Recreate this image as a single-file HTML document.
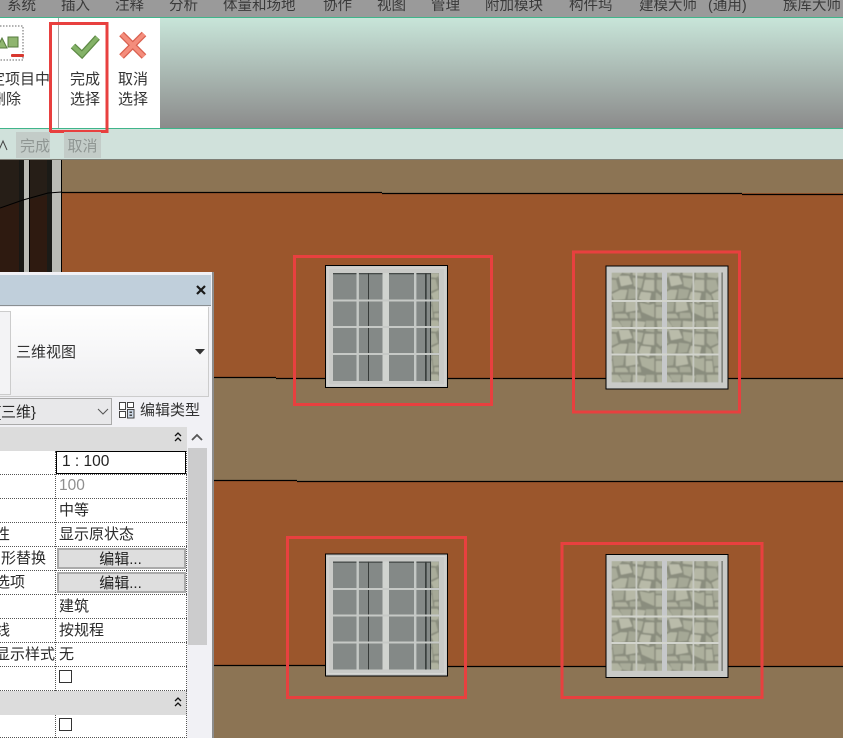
<!DOCTYPE html>
<html lang="zh"><head><meta charset="utf-8"><title>Revit</title>
<style>
html,body{margin:0;padding:0;background:#8c7454}
body{position:relative;width:843px;height:738px;overflow:hidden;font-family:"Liberation Sans","Noto Sans CJK SC",sans-serif;color:#222}
#w{position:absolute;left:0;top:0;width:843px;height:738px;overflow:hidden;filter:blur(.35px)}
.a{position:absolute;white-space:nowrap}
.t{position:absolute;white-space:nowrap;font-size:15px;line-height:20px;color:#2a2a2a}
.m{position:absolute;top:-4px;font-size:14.5px;line-height:20px;color:#3a3a3a;white-space:nowrap}
.r{position:absolute;left:0;width:187px;height:24px;border-bottom:1px dotted #555;box-sizing:border-box}
.btn{position:absolute;left:57px;width:129px;height:21px;background:#dedede;border:2px solid #aaa;box-sizing:border-box;font-size:15px;line-height:19px;text-align:center;color:#222;padding-right:2px}
.cb{position:absolute;left:59px;width:13px;height:13px;border:1px solid #333;background:#fff;box-sizing:border-box}
</style></head><body><div id="w">

<svg class="a" style="left:0;top:0" width="843" height="738" viewBox="0 0 843 738">
<defs>
<filter id="sb" x="0" y="0" width="100%" height="100%"><feGaussianBlur stdDeviation=".45"/></filter>
<pattern id="st" width="50" height="54" patternUnits="userSpaceOnUse">
<rect width="50" height="54" fill="#8a8d7e"/>
<g stroke-width="1.500" stroke-linejoin="round">
<path d="M2 2L12 2 16 7 11 12 3 11Z" fill="#b0b3a0" stroke="#b0b3a0"/><path d="M15 2L25 2 24 8 18 7Z" fill="#a8ab99" stroke="#a8ab99"/>
<path d="M28 2L39 3 37 10 28 9Z" fill="#b6b8a6" stroke="#b6b8a6"/><path d="M41 2L48 2 48 12 41 11Z" fill="#a9ac9a" stroke="#a9ac9a"/>
<path d="M2 15L10 15 12 23 5 26 2 23Z" fill="#a9ac9a" stroke="#a9ac9a"/><path d="M14 11L23 11 26 18 16 20Z" fill="#babcaa" stroke="#babcaa"/>
<path d="M28 13L37 14 35 22 29 20Z" fill="#acaf9c" stroke="#acaf9c"/><path d="M40 15L48 15 48 25 38 24Z" fill="#b5b7a5" stroke="#b5b7a5"/>
<path d="M7 29L15 25 21 25 19 33 9 34Z" fill="#b2b5a2" stroke="#b2b5a2"/><path d="M24 24L33 25 31 32 23 33Z" fill="#a5a896" stroke="#a5a896"/>
<path d="M36 27L45 28 43 37 34 33Z" fill="#b8baa8" stroke="#b8baa8"/><path d="M1 28L5 31 6 39 1 39Z" fill="#a7aa98" stroke="#a7aa98"/>
<path d="M8 37L18 37 17 45 9 46Z" fill="#a6a997" stroke="#a6a997"/><path d="M21 36L30 36 32 44 21 46Z" fill="#b7b9a7" stroke="#b7b9a7"/>
<path d="M35 38L44 40 48 39 48 51 37 46Z" fill="#adb09d" stroke="#adb09d"/><path d="M1 42L6 42 7 52 1 52Z" fill="#b2b5a2" stroke="#b2b5a2"/>
<path d="M10 49L20 49 22 52 10 52Z" fill="#aeb19e" stroke="#aeb19e"/><path d="M25 48L34 48 35 52 25 52Z" fill="#a7aa98" stroke="#a7aa98"/>
</g>
</pattern>
<g id="gw">
<rect x=".5" y=".5" width="122" height="122" fill="#c9cac7" stroke="#000"/>
<rect x="3" y="3" width="117" height="117" fill="none" stroke="#d6d7d4"/>
<rect x="8" y="8" width="106" height="108" fill="#848987"/>
<rect x="106" y="8" width="8" height="108" fill="url(#st)" filter="url(#sb)"/>
<rect x="8" y="8" width="97" height="1.300" fill="#454a48"/>
<rect x="43" y="8" width="1" height="108" fill="#383c3a"/>
<rect x="100" y="8" width="1.700" height="108" fill="#3b403e"/>
<rect x="105" y="8" width="1" height="108" fill="#3b403e"/>
<rect x="57.500" y="8" width="6.500" height="108" fill="#d0d3cf"/>
<rect x="31.500" y="8" width="2.400" height="108" fill="#c4c8c5"/>
<rect x="89" y="8" width="2.400" height="108" fill="#c4c8c5"/>
<rect x="8" y="34.500" width="106" height="2" fill="#c6c9c6"/>
<rect x="8" y="61" width="106" height="2" fill="#c6c9c6"/>
<rect x="8" y="88" width="106" height="2" fill="#c6c9c6"/>
</g>
<g id="sw">
<rect x=".5" y=".5" width="122" height="123" fill="#c9cac7" stroke="#000"/>
<rect x="6" y="7" width="107" height="110" fill="url(#st)" filter="url(#sb)"/>
<rect x="116" y="7" width="1.200" height="110" fill="#6a6d64"/>
<rect x="56.500" y="7" width="5" height="110" fill="#c6c8ca"/>
<rect x="30" y="7" width="1.800" height="110" fill="#c6c8c0"/>
<rect x="87" y="7" width="1.800" height="110" fill="#c6c8c0"/>
<rect x="6" y="34.500" width="107" height="2" fill="#d2d4cd"/>
<rect x="6" y="61.500" width="107" height="2" fill="#d2d4cd"/>
<rect x="6" y="88" width="107" height="2" fill="#d2d4cd"/>
</g>
</defs>
<rect width="843" height="738" fill="#8c7454"/>
<rect y="193" width="843" height="185" fill="#9b562c"/>
<rect y="481" width="843" height="185" fill="#9b562c"/>
<path d="M62 192.500H382M382 193.500H742M742 194.500H843M62 377.500H276M276 378.500H843M62 480.500H297M297 481.500H843M62 665.500H400M400 666.500H843" stroke="#000" stroke-width="1.200" fill="none"/>
<rect x="0" y="160" width="62" height="113" fill="#261e17"/>
<path d="M0 208L23 201 48 195V273H0Z" fill="#2e1a10"/>
<rect x="19" y="160" width="5" height="113" fill="#181815"/>
<rect x="24" y="160" width="5" height="113" fill="#b9bab4"/>
<rect x="29" y="160" width="1" height="113" fill="#000"/>
<rect x="47" y="160" width="5" height="113" fill="#1b1b17"/>
<rect x="52" y="160" width="9" height="113" fill="#bbbcb6"/>
<rect x="61" y="160" width="1" height="113" fill="#000"/>
<path d="M0 208L23 200 48 193 62 192" stroke="#000" fill="none"/>
<use href="#gw" x="325" y="265"/>
<use href="#sw" x="605.500" y="265.500"/>
<use href="#gw" x="325" y="553.500"/>
<use href="#sw" x="605.500" y="554"/>
<g fill="none" stroke="#e8403f" stroke-width="3">
<rect x="294.500" y="256.500" width="197" height="148"/>
<rect x="573.500" y="252" width="166" height="160"/>
<rect x="287.500" y="537.500" width="178" height="160"/>
<rect x="562" y="543.500" width="200" height="154"/>
</g>
</svg>

<!-- menu bar -->
<div class="a" style="left:0;top:0;width:843px;height:17px;background:#9a9a9a;overflow:hidden">
<span class="m" style="left:7px">系统</span>
<span class="m" style="left:61px">插入</span>
<span class="m" style="left:115px">注释</span>
<span class="m" style="left:169px">分析</span>
<span class="m" style="left:223px">体量和场地</span>
<span class="m" style="left:323px">协作</span>
<span class="m" style="left:377px">视图</span>
<span class="m" style="left:431px">管理</span>
<span class="m" style="left:485px">附加模块</span>
<span class="m" style="left:569px">构件坞</span>
<span class="m" style="left:639px">建模大师</span>
<span class="m" style="left:708px">(通用)</span>
<span class="m" style="left:783px">族库大师</span>
</div>

<!-- ribbon -->
<div class="a" style="left:0;top:17px;width:843px;height:1px;background:#3fb58a"></div>
<div class="a" style="left:0;top:18px;width:843px;height:110px;background:linear-gradient(#c8e5d9,#8b8b8b)"></div>
<div class="a" style="left:0;top:18px;width:160px;height:110px;background:#fff"></div>
<div class="a" style="left:58px;top:18px;width:1px;height:110px;background:#a8a8a8"></div>
<div class="a" style="left:0;top:128px;width:843px;height:1px;background:#3fb58a"></div>
<div class="a" style="left:0;top:129px;width:843px;height:30px;background:#d0e1db"></div>
<div class="a" style="left:0;top:159px;width:843px;height:1px;background:#7d7d75"></div>

<svg class="a" style="left:0;top:18px" width="160" height="60" viewBox="0 18 160 60">
<path d="M0 26H23V60H0" fill="none" stroke="#666" stroke-dasharray="1.500 1.500"/>
<path d="M-3 48L2 38 7 48Z" fill="#8fb56f" stroke="#557a3e"/>
<rect x="8" y="37" width="10" height="10" fill="#8fb56f" stroke="#557a3e"/>
<rect x="11" y="54" width="13" height="3" rx="1" fill="#d8382f"/>
<path d="M73 46L82 54.500 97.500 37.500" fill="none" stroke="#5e8a45" stroke-width="6.500"/>
<path d="M73 46L82 54.500 97.500 37.500" fill="none" stroke="#84b268" stroke-width="4"/>
<path d="M121.500 34L144 56.500M144 34L121.500 56.500" fill="none" stroke="#d9604f" stroke-width="6.500"/>
<path d="M121.500 34L144 56.500M144 34L121.500 56.500" fill="none" stroke="#f48d7c" stroke-width="4"/>
</svg>
<span class="t" style="left:-10px;top:70px;color:#333">定项目中</span>
<span class="t" style="left:-9px;top:90px;color:#333">删除</span>
<span class="t" style="left:70px;top:70px;color:#333">完成</span>
<span class="t" style="left:70px;top:90px;color:#333">选择</span>
<span class="t" style="left:118px;top:70px;color:#333">取消</span>
<span class="t" style="left:118px;top:90px;color:#333">选择</span>
<svg class="a" style="left:49px;top:22px" width="60" height="111"><rect x="1.500" y="1.500" width="56.500" height="108" fill="none" stroke="#e8403f" stroke-width="3"/></svg>

<svg class="a" style="left:0;top:138px" width="8" height="14"><path d="M-1 12L3 3 7 12" fill="none" stroke="#444"/></svg>
<div class="a" style="left:16px;top:132px;width:34px;height:26px;background:#c3ccc8;color:#8f9693;font-size:15px;line-height:29px;text-align:right;box-sizing:border-box">完成</div>
<div class="a" style="left:64px;top:132px;width:37px;height:26px;background:#c3ccc8;color:#8f9693;font-size:15px;line-height:29px;text-align:center">取消</div>

<!-- properties panel -->
<div class="a" style="left:0;top:272px;width:212px;height:466px;background:#f1f1f5"></div>
<div class="a" style="left:212px;top:272px;width:2px;height:466px;background:#8d8d8d"></div>
<div class="a" style="left:0;top:275px;width:211px;height:30px;background:#c0cfdb;border-bottom:1px solid #8a8f92"></div>
<svg class="a" style="left:195px;top:284px" width="12" height="12"><path d="M2 2L10 10M10 2L2 10" stroke="#1a1a1a" stroke-width="2.200"/></svg>
<div class="a" style="left:0;top:307px;width:208px;height:89px;background:linear-gradient(#fff,#eeeef0);border-right:1px solid #ccc;border-bottom:1px solid #ccc"></div>
<div class="a" style="left:0;top:311px;width:10px;height:82px;background:#f3f3f5;border:1px solid #ccc;border-left:0"></div>
<span class="t" style="left:16px;top:343px;color:#333">三维视图</span>
<svg class="a" style="left:195px;top:349px" width="10" height="6"><path d="M0 0H10L5 5.500Z" fill="#333"/></svg>

<div class="a" style="left:0;top:398px;width:112px;height:27px;background:#e8e8ea;border:1px solid #aaa;border-left:0;box-sizing:border-box"></div>
<span class="t" style="left:-4px;top:403px">{三维}</span>
<svg class="a" style="left:97px;top:408px" width="12" height="8"><path d="M1 1L6 6 11 1" fill="none" stroke="#555"/></svg>
<svg class="a" style="left:119px;top:402px" width="16" height="17"><rect x=".5" y=".5" width="6" height="7" fill="#fff" stroke="#444"/><rect x="8.500" y=".5" width="6" height="5" fill="#fff" stroke="#444"/><rect x=".5" y="9.500" width="6" height="6" fill="#fff" stroke="#444"/><rect x="8.500" y="7.500" width="6.500" height="8.500" fill="#cdd8e6" stroke="#444"/><rect x="10.500" y="9.500" width="2.500" height="1.500" fill="#444"/><rect x="10.500" y="12.500" width="2.500" height="1.500" fill="#444"/></svg>
<span class="t" style="left:140px;top:401px;color:#333">编辑类型</span>

<div class="a" style="left:0;top:427px;width:187px;height:24px;background:#dcdcdc"></div>
<svg class="a" style="left:173px;top:431px" width="10" height="12"><path d="M2 5L5 2 8 5M2 10L5 7 8 10" fill="none" stroke="#111" stroke-width="1.300"/></svg>
<div class="a" style="left:0;top:451px;width:187px;height:287px;background:#fff"></div>
<div class="r" style="top:451px"></div><div class="r" style="top:475px"></div><div class="r" style="top:499px"></div>
<div class="r" style="top:523px"></div><div class="r" style="top:547px"></div><div class="r" style="top:571px"></div>
<div class="r" style="top:595px"></div><div class="r" style="top:619px"></div><div class="r" style="top:643px"></div>
<div class="r" style="top:667px"></div>
<div class="a" style="left:0;top:691px;width:187px;height:24px;background:#dcdcdc"></div>
<div class="r" style="top:714px"></div>
<svg class="a" style="left:173px;top:695px" width="10" height="14"><path d="M2 6L5 3 8 6M2 11L5 8 8 11" fill="none" stroke="#111" stroke-width="1.300"/></svg>
<div class="a" style="left:55px;top:451px;width:0;height:240px;border-left:1px dotted #555"></div>
<div class="a" style="left:55px;top:715px;width:0;height:23px;border-left:1px dotted #555"></div>
<div class="a" style="left:186px;top:451px;width:0;height:287px;border-left:1px dotted #555"></div>
<div class="a" style="left:56px;top:451px;width:130px;height:23px;background:#fff;border:1px solid #000;box-sizing:border-box"></div>
<span class="t" style="left:62px;top:452px;color:#222;font-size:15.500px">1 : 100</span>
<span class="t" style="left:59px;top:476px;color:#8f8f8f;font-size:15.500px">100</span>
<span class="t" style="left:59px;top:501px">中等</span>
<span class="t" style="left:-5px;top:525px">性</span><span class="t" style="left:59px;top:525px">显示原状态</span>
<span class="t" style="left:-14px;top:549px">图形替换</span><div class="btn" style="top:548px">编辑...</div>
<span class="t" style="left:-5px;top:573px">选项</span><div class="btn" style="top:572px">编辑...</div>
<span class="t" style="left:59px;top:597px">建筑</span>
<span class="t" style="left:-5px;top:621px">线</span><span class="t" style="left:59px;top:621px">按规程</span>
<span class="t" style="left:-5px;top:645px;width:60px;overflow:hidden">显示样式</span><span class="t" style="left:59px;top:645px">无</span>
<div class="cb" style="top:670px"></div>
<div class="cb" style="top:718px"></div>

<svg class="a" style="left:191px;top:432px" width="12" height="10"><path d="M1 8L6 3 11 8" fill="none" stroke="#555" stroke-width="1.800"/></svg>
<div class="a" style="left:188px;top:448px;width:19px;height:197px;background:#cccccd"></div>
</div></body></html>
